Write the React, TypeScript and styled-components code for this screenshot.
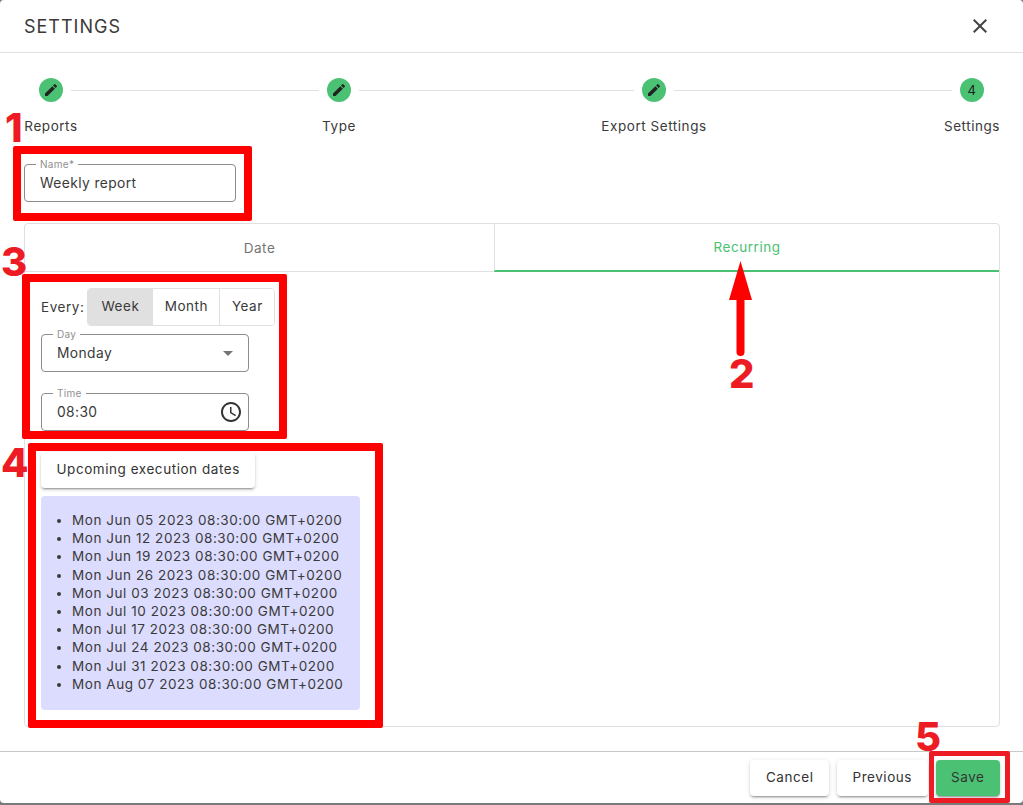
import React from "react";
import styled, { createGlobalStyle } from "styled-components";
import { MdAccessTime, MdArrowDropDown, MdClose, MdEdit } from "react-icons/md";

const GlobalStyle = createGlobalStyle`
  html, body {
    margin: 0;
    height: 805px;
    overflow: hidden;
    background: #7a7a7a;
  }
  * {
    box-sizing: border-box;
  }
`;

const Dialog = styled.div`
  position: relative;
  display: flex;
  flex-direction: column;
  width: 1023px;
  height: 803px;
  background: #fff;
  border-radius: 4px;
  color: #3a3a3a;
  font-family: "Inter", "Liberation Sans", sans-serif;
  font-size: 13.5px;
  letter-spacing: 0.55px;
  overflow: hidden;
`;

const Header = styled.div`
  display: flex;
  align-items: center;
  justify-content: space-between;
  height: 53px;
  padding: 0 24px;
  border-bottom: 1px solid #e0e0e0;
  flex: none;
`;

const Title = styled.div`
  font-size: 18px;
  letter-spacing: 1px;
  color: #3a3a3a;
`;

const CloseButton = styled.div`
  display: flex;
  color: #444;
  margin-right: 7px;
`;

const Body = styled.div`
  flex: 1;
  padding: 25px 23px 24px 24px;
  display: flex;
  flex-direction: column;
`;

const Stepper = styled.div`
  display: flex;
  padding-left: 15px;
  height: 86px;
  flex: none;
`;

const Step = styled.div`
  display: flex;
  flex-direction: column;
  align-items: center;
  width: 24px;
  flex: none;
`;

const StepCircle = styled.div`
  display: flex;
  align-items: center;
  justify-content: center;
  width: 24px;
  height: 24px;
  border-radius: 50%;
  background: #4bc273;
  color: #222;
  font-size: 13px;
  flex: none;
`;

const StepLabel = styled.div`
  margin-top: 15px;
  line-height: 18px;
  white-space: nowrap;
`;

const Connector = styled.div<{ $width: number }>`
  width: ${(p) => p.$width}px;
  height: 1px;
  margin: 12px 8px 0;
  background: #e0e0e0;
  flex: none;
`;

const Field = styled.div<{ $width: number; $mt?: number }>`
  position: relative;
  display: flex;
  align-items: center;
  justify-content: space-between;
  width: ${(p) => p.$width}px;
  height: 38px;
  margin-top: ${(p) => p.$mt ?? 0}px;
  padding: 0 6px 0 15px;
  border: 1px solid #8c8c8c;
  border-radius: 4px;
  font-size: 13.8px;
  letter-spacing: 0.4px;
  line-height: 18px;
  flex: none;
`;

const FieldLabel = styled.span`
  position: absolute;
  top: -7px;
  left: 11px;
  padding: 0 4px;
  background: #fff;
  color: #8f8f8f;
  font-size: 10px;
  line-height: 12px;
  letter-spacing: 0.3px;
`;

const SelectIcon = styled.span`
  display: flex;
  color: #757575;
  margin-right: 2px;
`;

const TimeIcon = styled.span`
  display: flex;
  color: #333;
  margin-right: -1px;
`;

const TabPanel = styled.div`
  display: flex;
  flex-direction: column;
  height: 504px;
  margin-top: 21px;
  border: 1px solid #e0e0e0;
  border-radius: 4px;
  flex: none;
`;

const Tabs = styled.div`
  display: flex;
  height: 48px;
  flex: none;
`;

const Tab = styled.div<{ $active?: boolean; $width: number }>`
  display: flex;
  align-items: center;
  justify-content: center;
  width: ${(p) => p.$width}px;
  flex: ${(p) => (p.$active ? 1 : "none")};
  color: ${(p) => (p.$active ? "#4bc273" : "#757575")};
  border-bottom: ${(p) => (p.$active ? "2px solid #4bc273" : "1px solid #e0e0e0")};
  border-left: ${(p) => (p.$active ? "1px solid #e0e0e0" : "none")};
`;

const TabContent = styled.div`
  display: flex;
  flex-direction: column;
  padding: 16px 16px 0;
`;

const EveryRow = styled.div`
  display: flex;
  align-items: center;
  gap: 3px;
  height: 38px;
`;

const Toggle = styled.div`
  display: flex;
  height: 38px;
  border: 1px solid #e0e0e0;
  border-radius: 4px;
  overflow: hidden;
`;

const ToggleItem = styled.div<{ $selected?: boolean; $width: number }>`
  display: flex;
  align-items: center;
  justify-content: center;
  width: ${(p) => p.$width}px;
  padding-bottom: 2px;
  background: ${(p) => (p.$selected ? "#e0e0e0" : "#fff")};
  border-left: ${(p) => (p.$selected ? "none" : "1px solid #e0e0e0")};
  &:first-child {
    border-left: none;
  }
`;

const ElevatedButton = styled.div<{ $green?: boolean }>`
  display: inline-flex;
  align-items: center;
  justify-content: center;
  height: 36px;
  min-width: 64px;
  padding: 0 15.5px 2px;
  border-radius: 4px;
  background: ${(p) => (p.$green ? "#4bc273" : "#fff")};
  color: #333;
  box-shadow:
    0 3px 1px -2px rgba(0, 0, 0, 0.2),
    0 2px 2px 0 rgba(0, 0, 0, 0.14),
    0 1px 5px 0 rgba(0, 0, 0, 0.12);
`;

const UpcomingButton = styled(ElevatedButton)`
  align-self: flex-start;
  margin-top: 21px;
`;

const DatesBox = styled.div`
  width: 319px;
  height: 214px;
  margin-top: 8px;
  padding: 15px 0 0;
  border-radius: 4px;
  background: #dcdcfe;
`;

const DatesList = styled.ul`
  margin: 0;
  padding: 0 0 0 31px;
  line-height: 18.2px;
`;

const Footer = styled.div`
  display: flex;
  align-items: center;
  justify-content: flex-end;
  gap: 8px;
  height: 52px;
  padding-right: 23px;
  border-top: 1px solid #c8c8c8;
  flex: none;
`;

const Frame = styled.div<{ $x: number; $y: number; $w: number; $h: number; $stroke: number; $color: string }>`
  position: absolute;
  left: ${(p) => p.$x}px;
  top: ${(p) => p.$y}px;
  width: ${(p) => p.$w}px;
  height: ${(p) => p.$h}px;
  border: ${(p) => p.$stroke}px solid ${(p) => p.$color};
  border-radius: 2px;
`;

const Marker = styled.div<{ $x: number; $y: number }>`
  position: absolute;
  left: ${(p) => p.$x}px;
  top: ${(p) => p.$y}px;
  color: #ed1c24;
  font-family: "Inter", "Liberation Sans", sans-serif;
  font-size: 40px;
  line-height: 40px;
  font-weight: 800;
  letter-spacing: 0;
`;

const Arrow = styled.svg`
  position: absolute;
  left: 728px;
  top: 260px;
`;

const dates = [
  "Mon Jun 05 2023 08:30:00 GMT+0200",
  "Mon Jun 12 2023 08:30:00 GMT+0200",
  "Mon Jun 19 2023 08:30:00 GMT+0200",
  "Mon Jun 26 2023 08:30:00 GMT+0200",
  "Mon Jul 03 2023 08:30:00 GMT+0200",
  "Mon Jul 10 2023 08:30:00 GMT+0200",
  "Mon Jul 17 2023 08:30:00 GMT+0200",
  "Mon Jul 24 2023 08:30:00 GMT+0200",
  "Mon Jul 31 2023 08:30:00 GMT+0200",
  "Mon Aug 07 2023 08:30:00 GMT+0200",
];

export default function App() {
  return (
    <>
      <GlobalStyle />
      <Dialog>
        <Header>
          <Title>SETTINGS</Title>
          <CloseButton>
            <MdClose size={24} />
          </CloseButton>
        </Header>
        <Body>
          <Stepper>
            <Step>
              <StepCircle>
                <MdEdit size={16} />
              </StepCircle>
              <StepLabel>Reports</StepLabel>
            </Step>
            <Connector $width={248} />
            <Step>
              <StepCircle>
                <MdEdit size={16} />
              </StepCircle>
              <StepLabel>Type</StepLabel>
            </Step>
            <Connector $width={275} />
            <Step>
              <StepCircle>
                <MdEdit size={16} />
              </StepCircle>
              <StepLabel>Export Settings</StepLabel>
            </Step>
            <Connector $width={278} />
            <Step>
              <StepCircle>4</StepCircle>
              <StepLabel>Settings</StepLabel>
            </Step>
          </Stepper>
          <Field $width={212}>
            <FieldLabel>Name*</FieldLabel>
            Weekly report
          </Field>
          <TabPanel>
            <Tabs>
              <Tab $width={469}>Date</Tab>
              <Tab $width={505} $active>
                Recurring
              </Tab>
            </Tabs>
            <TabContent>
              <EveryRow>
                Every:
                <Toggle>
                  <ToggleItem $selected $width={64}>
                    Week
                  </ToggleItem>
                  <ToggleItem $width={67}>Month</ToggleItem>
                  <ToggleItem $width={55}>Year</ToggleItem>
                </Toggle>
              </EveryRow>
              <Field $width={208} $mt={8}>
                <FieldLabel>Day</FieldLabel>
                Monday
                <SelectIcon>
                  <MdArrowDropDown size={24} />
                </SelectIcon>
              </Field>
              <Field $width={208} $mt={21}>
                <FieldLabel>Time</FieldLabel>
                08:30
                <TimeIcon>
                  <MdAccessTime size={24} />
                </TimeIcon>
              </Field>
              <UpcomingButton>Upcoming execution dates</UpcomingButton>
              <DatesBox>
                <DatesList>
                  {dates.map((d) => (
                    <li key={d}>{d}</li>
                  ))}
                </DatesList>
              </DatesBox>
            </TabContent>
          </TabPanel>
        </Body>
        <Footer>
          <ElevatedButton>Cancel</ElevatedButton>
          <ElevatedButton>Previous</ElevatedButton>
          <ElevatedButton $green>Save</ElevatedButton>
        </Footer>

        <Frame $x={13} $y={146} $w={239} $h={75} $stroke={8} $color="#fe0000" />
        <Frame $x={22} $y={274} $w={265} $h={165} $stroke={8} $color="#fe0000" />
        <Frame $x={28} $y={443} $w={355} $h={285} $stroke={8} $color="#fe0000" />
        <Frame $x={929} $y={751} $w={81} $h={52} $stroke={5} $color="#ed1c24" />
        <Arrow width="25" height="96" viewBox="0 0 25 96">
          <path d="M12.5 1 L24 40 L16.5 40 L16.5 92 A4 4 0 0 1 8.5 92 L8.5 40 L1 40 Z" fill="#fe0000" />
        </Arrow>
        <Marker $x={5} $y={108}>1</Marker>
        <Marker $x={729} $y={354}>2</Marker>
        <Marker $x={1} $y={242}>3</Marker>
        <Marker $x={1} $y={443}>4</Marker>
        <Marker $x={915} $y={717}>5</Marker>
      </Dialog>
    </>
  );
}
